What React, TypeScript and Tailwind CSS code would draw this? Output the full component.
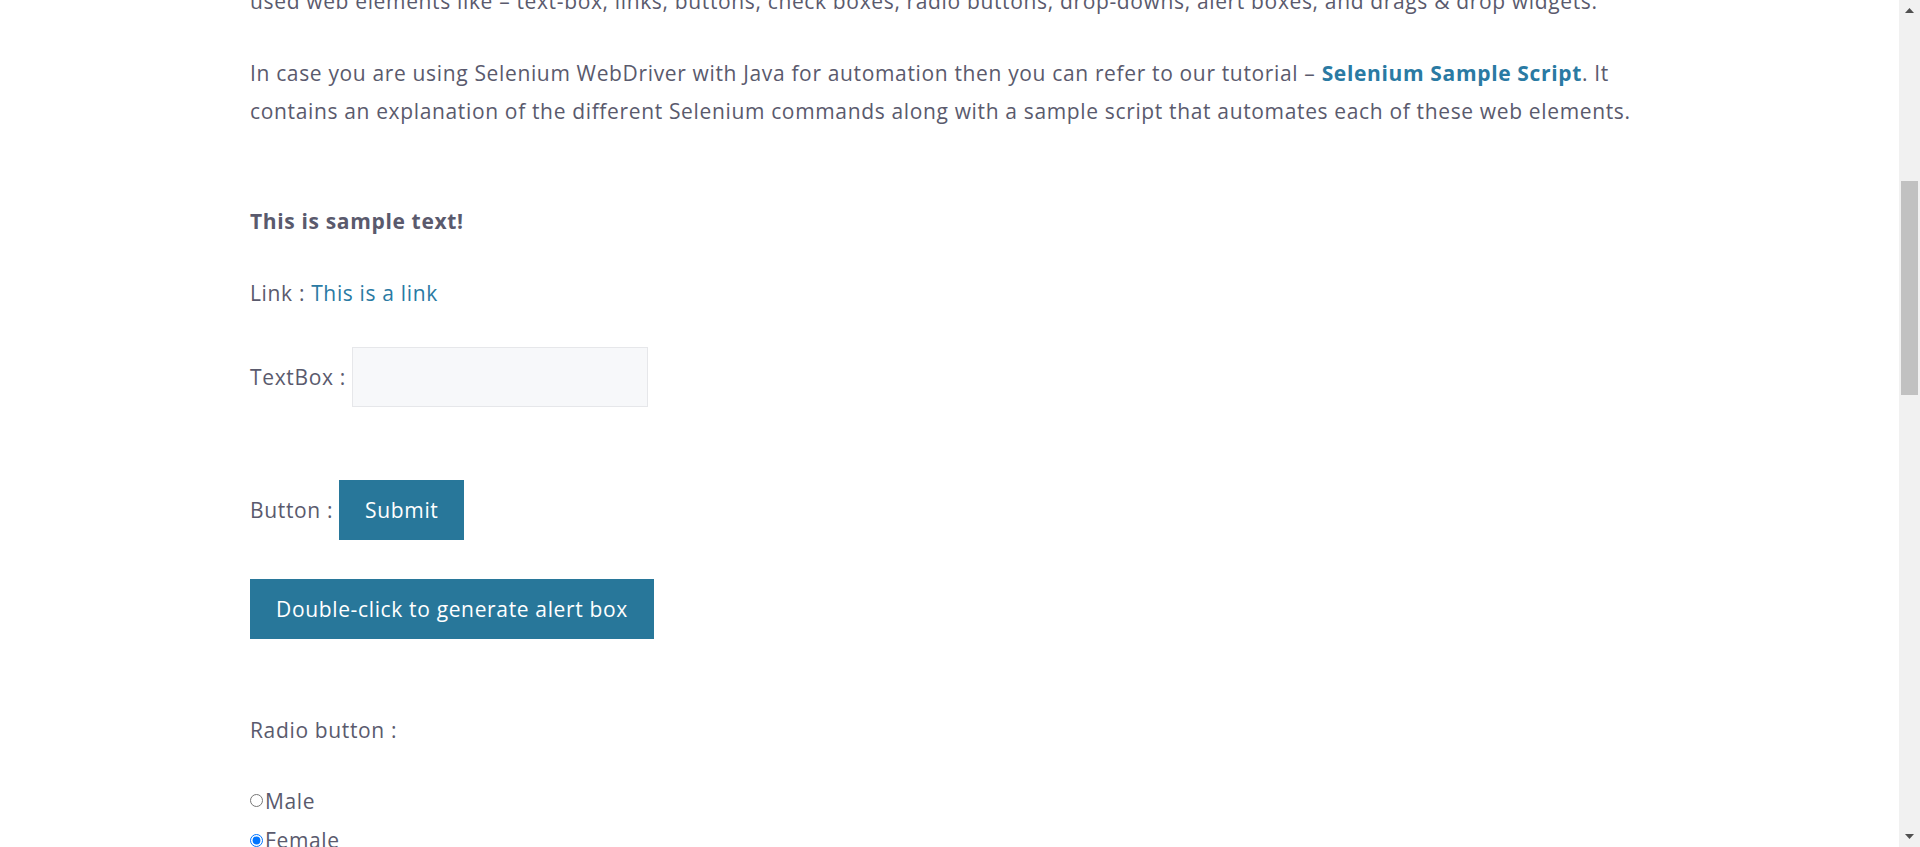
import React from 'react'

const linkCls = 'text-[#2a7aa3] no-underline'

function Scrollbar() {
  return (
    <div className="flex h-full w-[21px] shrink-0 flex-col items-center bg-[#f1f1f1]">
      <div className="flex h-[21px] w-full items-center justify-center">
        <svg width="9" height="5" viewBox="0 0 9 5">
          <path d="M0 5 L4.5 0 L9 5 Z" fill="#505050" />
        </svg>
      </div>
      <div className="h-[160px] w-full" />
      <div className="h-[214px] w-[17px] bg-[#c1c1c1]" />
      <div className="flex-1" />
      <div className="flex h-[21px] w-full items-center justify-center">
        <svg width="9" height="5" viewBox="0 0 9 5">
          <path d="M0 0 L9 0 L4.5 5 Z" fill="#505050" />
        </svg>
      </div>
    </div>
  )
}

export default function App() {
  return (
    <div className="flex h-[847px] w-full overflow-hidden bg-white">
      <main className="min-w-0 flex-1 overflow-hidden">
        <div className="-mt-[18px] ml-[250px] font-['Open_Sans',sans-serif] text-[21px] leading-[38px] tracking-[0.65px] text-[#5a5a6d]">
          {/* tail of intro paragraph */}
          <p className="whitespace-nowrap">
            used web elements like – text-box, links, buttons, check boxes, radio buttons, drop-downs, alert boxes, and drags &amp; drop widgets.
          </p>

          <p className="mt-[34px] whitespace-nowrap">
            In case you are using Selenium WebDriver with Java for automation then you can refer to our tutorial –{' '}
            <a href="#" className={`${linkCls} font-bold`}>
              Selenium Sample Script
            </a>
            . It
            <br />
            contains an explanation of the different Selenium commands along with a sample script that automates each of these web elements.
          </p>

          <p className="mt-[72px] font-bold">This is sample text!</p>

          <p className="mt-[34px]">
            Link : <a href="#" className={linkCls}>This is a link</a>
          </p>

          <div className="mt-[35px] flex items-center gap-[6px]">
            <span>TextBox :</span>
            <input
              type="text"
              className="h-[60px] w-[296px] border border-[#e6e7ea] bg-[#f7f8fa] px-3 outline-none"
            />
          </div>

          <div className="mt-[73px] flex items-center gap-[6px]">
            <span>Button :</span>
            <button className="flex h-[60px] items-center bg-[#28779a] px-[26px] text-white">Submit</button>
          </div>

          <button className="mt-[39px] flex h-[60px] items-center bg-[#28779a] px-[26px] text-white">
            Double-click to generate alert box
          </button>

          <p className="mt-[72px]">Radio button :</p>

          <div className="mt-[31px]">
            <label className="inline-flex items-center">
              <input type="radio" name="gender" className="m-0 mr-[2px] h-[13px] w-[13px]" />
              Male
            </label>
          </div>
          <div>
            <label className="inline-flex items-center">
              <input type="radio" name="gender" defaultChecked className="m-0 mr-[2px] h-[13px] w-[13px]" />
              Female
            </label>
          </div>
        </div>
      </main>
      <Scrollbar />
    </div>
  )
}
